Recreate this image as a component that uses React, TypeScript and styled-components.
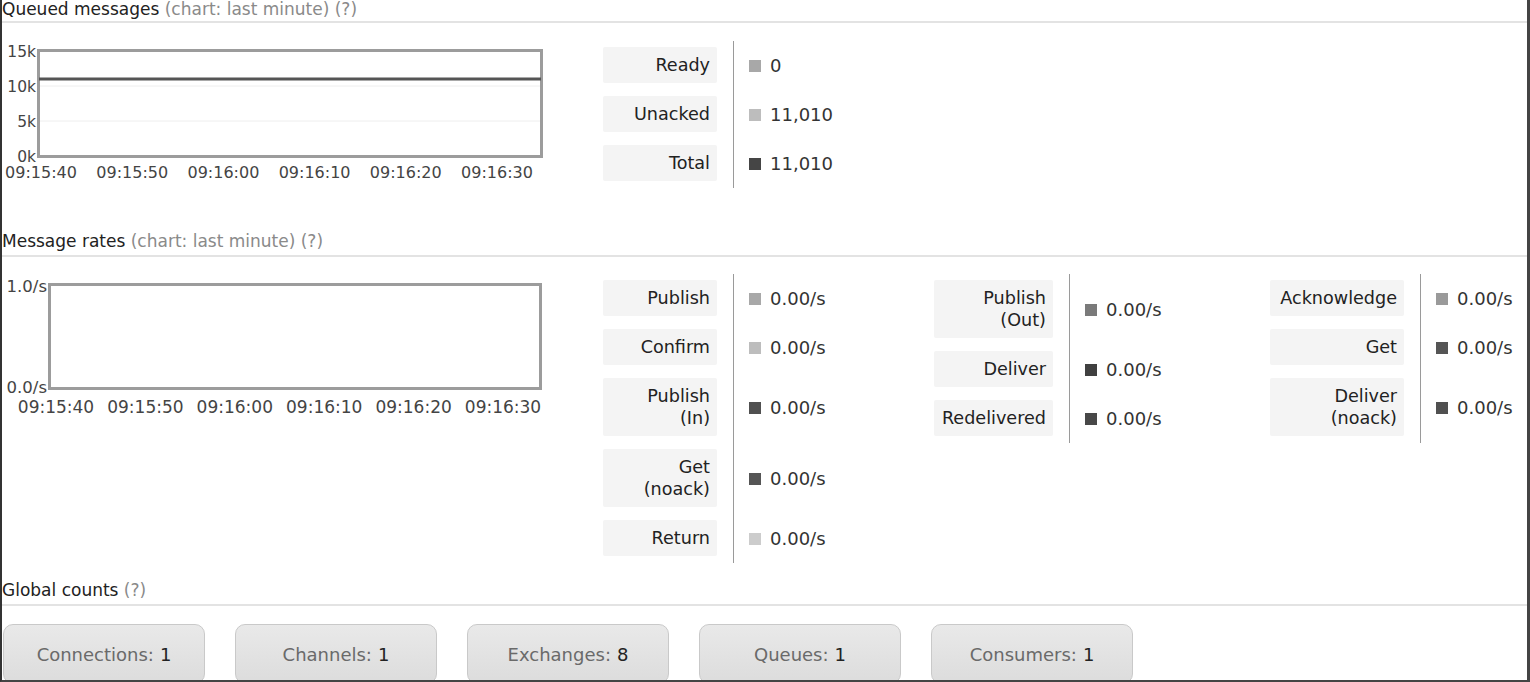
import React from 'react';
import styled, { createGlobalStyle } from 'styled-components';

const GlobalStyle = createGlobalStyle`
  html, body {
    margin: 0;
    padding: 0;
    background: #fff;
  }
  body {
    font-family: 'DejaVu Sans', Verdana, sans-serif;
    color: #222;
  }
`;

const Frame = styled.div`
  box-sizing: border-box;
  width: 1530px;
  height: 682px;
  overflow: hidden;
  border-left: 2px solid #333;
  border-right: 3px solid #444;
  border-bottom: 2px solid #444;
`;

const SectionTitle = styled.h2<{ $first?: boolean }>`
  margin: 0;
  padding: 0 0 ${(p) => (p.$first ? '2px' : '4px')};
  font-size: 17px;
  font-weight: normal;
  line-height: ${(p) => (p.$first ? '19px' : '20px')};
  color: #222;
  white-space: nowrap;
  border-bottom: 2px solid #e3e3e3;
`;

const Hint = styled.span`
  color: #8a8a8a;
`;

const SectionBody = styled.div<{ $height: number }>`
  display: flex;
  box-sizing: border-box;
  height: ${(p) => p.$height}px;
`;

const ChartSlot = styled.div`
  flex: 0 0 601px;
`;

const ChartSvg = styled.svg`
  display: block;
  font-family: 'DejaVu Sans', Verdana, sans-serif;
`;

const LegendGroup = styled.div<{ $width?: number; $top: number }>`
  flex: ${(p) => (p.$width ? `0 0 ${p.$width}px` : '1 1 auto')};
  padding-top: ${(p) => p.$top}px;
`;

const LegendRow = styled.div`
  display: flex;
`;

const LabelCell = styled.div<{ $box: number }>`
  flex: 0 0 ${(p) => p.$box + 16}px;
  box-sizing: border-box;
  padding: 6px 16px 7px 0;
`;

const LabelBox = styled.div`
  background: #f4f4f4;
  border-radius: 2px;
  padding: 7px 7px;
  line-height: 22px;
  font-size: 17.6px;
  text-align: right;
  color: #222;
`;

const ValueCell = styled.div`
  display: flex;
  align-items: center;
  border-left: 1px solid #9a9a9a;
  padding-left: 15px;
  font-size: 18px;
  color: #333;
  white-space: nowrap;
`;

const Swatch = styled.span<{ $color: string }>`
  display: inline-block;
  width: 12px;
  height: 12px;
  margin-right: 9px;
  background: ${(p) => p.$color};
`;

const CountRow = styled.div`
  display: flex;
  gap: 30px;
  padding: 18px 0 0 1px;
`;

const CountButton = styled.div`
  box-sizing: border-box;
  width: 202px;
  height: 60px;
  display: flex;
  align-items: center;
  justify-content: center;
  border: 1px solid #c9c9c9;
  border-radius: 10px;
  background: linear-gradient(#e9e9e9, #dcdcdc);
  font-size: 18px;
  color: #6a6a6a;
`;

const CountValue = styled.span`
  margin-left: 6px;
  color: #222;
`;

type Legend = { label: string[]; value: string; color: string };

const LegendColumn = ({
  items,
  box,
  width,
  top,
}: {
  items: Legend[];
  box: number;
  width?: number;
  top: number;
}) => (
  <LegendGroup $width={width} $top={top}>
    {items.map((it) => (
      <LegendRow key={it.label.join(' ')}>
        <LabelCell $box={box}>
          <LabelBox>
            {it.label.map((l, i) => (
              <div key={i}>{l}</div>
            ))}
          </LabelBox>
        </LabelCell>
        <ValueCell>
          <Swatch $color={it.color} />
          {it.value}
        </ValueCell>
      </LegendRow>
    ))}
  </LegendGroup>
);

const times = ['09:15:40', '09:15:50', '09:16:00', '09:16:10', '09:16:20', '09:16:30'];

const QueuedChart = () => {
  const top = 28;
  const bottom = 133;
  const y = (v: number) => bottom - ((bottom - top) * v) / 15000;
  const ticks = [15000, 10000, 5000, 0];
  return (
    <ChartSvg width={601} height={170}>
      {ticks.slice(1, 3).map((t) => (
        <line key={t} x1={37} x2={539} y1={y(t)} y2={y(t)} stroke="#eeeeee" strokeWidth={1} />
      ))}
      <rect x={36.5} y={27.5} width={503} height={106} fill="none" stroke="#9c9c9c" strokeWidth={3} />
      <line x1={37} x2={539} y1={y(11010)} y2={y(11010)} stroke="#555" strokeWidth={3} />
      {ticks.map((t) => (
        <text key={t} x={34} y={y(t) + 6} textAnchor="end" fontSize={15.5} fill="#444">
          {t / 1000}k
        </text>
      ))}
      {times.map((t, i) => (
        <text key={t} x={39 + 91.2 * i} y={155} textAnchor="middle" fontSize={16} fill="#444">
          {t}
        </text>
      ))}
    </ChartSvg>
  );
};

const RatesChart = () => (
  <ChartSvg width={601} height={162}>
    <rect x={47.5} y={27.5} width={491} height={104} fill="none" stroke="#9c9c9c" strokeWidth={3} />
    <text x={45} y={35} textAnchor="end" fontSize={16.5} fill="#444">
      1.0/s
    </text>
    <text x={45} y={136} textAnchor="end" fontSize={16.5} fill="#444">
      0.0/s
    </text>
    {times.map((t, i) => (
      <text key={t} x={54 + 89.4 * i} y={156} textAnchor="middle" fontSize={17} fill="#444">
        {t}
      </text>
    ))}
  </ChartSvg>
);

const queued: Legend[] = [
  { label: ['Ready'], value: '0', color: '#a8a8a8' },
  { label: ['Unacked'], value: '11,010', color: '#bdbdbd' },
  { label: ['Total'], value: '11,010', color: '#454545' },
];

const ratesIn: Legend[] = [
  { label: ['Publish'], value: '0.00/s', color: '#a8a8a8' },
  { label: ['Confirm'], value: '0.00/s', color: '#bdbdbd' },
  { label: ['Publish', '(In)'], value: '0.00/s', color: '#505050' },
  { label: ['Get', '(noack)'], value: '0.00/s', color: '#555555' },
  { label: ['Return'], value: '0.00/s', color: '#cccccc' },
];

const ratesOut: Legend[] = [
  { label: ['Publish', '(Out)'], value: '0.00/s', color: '#7a7a7a' },
  { label: ['Deliver'], value: '0.00/s', color: '#404040' },
  { label: ['Redelivered'], value: '0.00/s', color: '#484848' },
];

const ratesAck: Legend[] = [
  { label: ['Acknowledge'], value: '0.00/s', color: '#9a9a9a' },
  { label: ['Get'], value: '0.00/s', color: '#555555' },
  { label: ['Deliver', '(noack)'], value: '0.00/s', color: '#505050' },
];

const counts = [
  ['Connections:', '1'],
  ['Channels:', '1'],
  ['Exchanges:', '8'],
  ['Queues:', '1'],
  ['Consumers:', '1'],
];

export default function App() {
  return (
    <>
      <GlobalStyle />
      <Frame>
        <SectionTitle $first>
          Queued messages <Hint>(chart: last minute) (?)</Hint>
        </SectionTitle>
        <SectionBody $height={208}>
          <ChartSlot>
            <QueuedChart />
          </ChartSlot>
          <LegendColumn items={queued} box={114} top={18} />
        </SectionBody>

        <SectionTitle>
          Message rates <Hint>(chart: last minute) (?)</Hint>
        </SectionTitle>
        <SectionBody $height={323}>
          <ChartSlot>
            <RatesChart />
          </ChartSlot>
          <LegendColumn items={ratesIn} box={114} width={331} top={17} />
          <LegendColumn items={ratesOut} box={119} width={336} top={17} />
          <LegendColumn items={ratesAck} box={134} top={17} />
        </SectionBody>

        <SectionTitle>
          Global counts <Hint>(?)</Hint>
        </SectionTitle>
        <CountRow>
          {counts.map(([label, value]) => (
            <CountButton key={label}>
              {label}
              <CountValue>{value}</CountValue>
            </CountButton>
          ))}
        </CountRow>
      </Frame>
    </>
  );
}
